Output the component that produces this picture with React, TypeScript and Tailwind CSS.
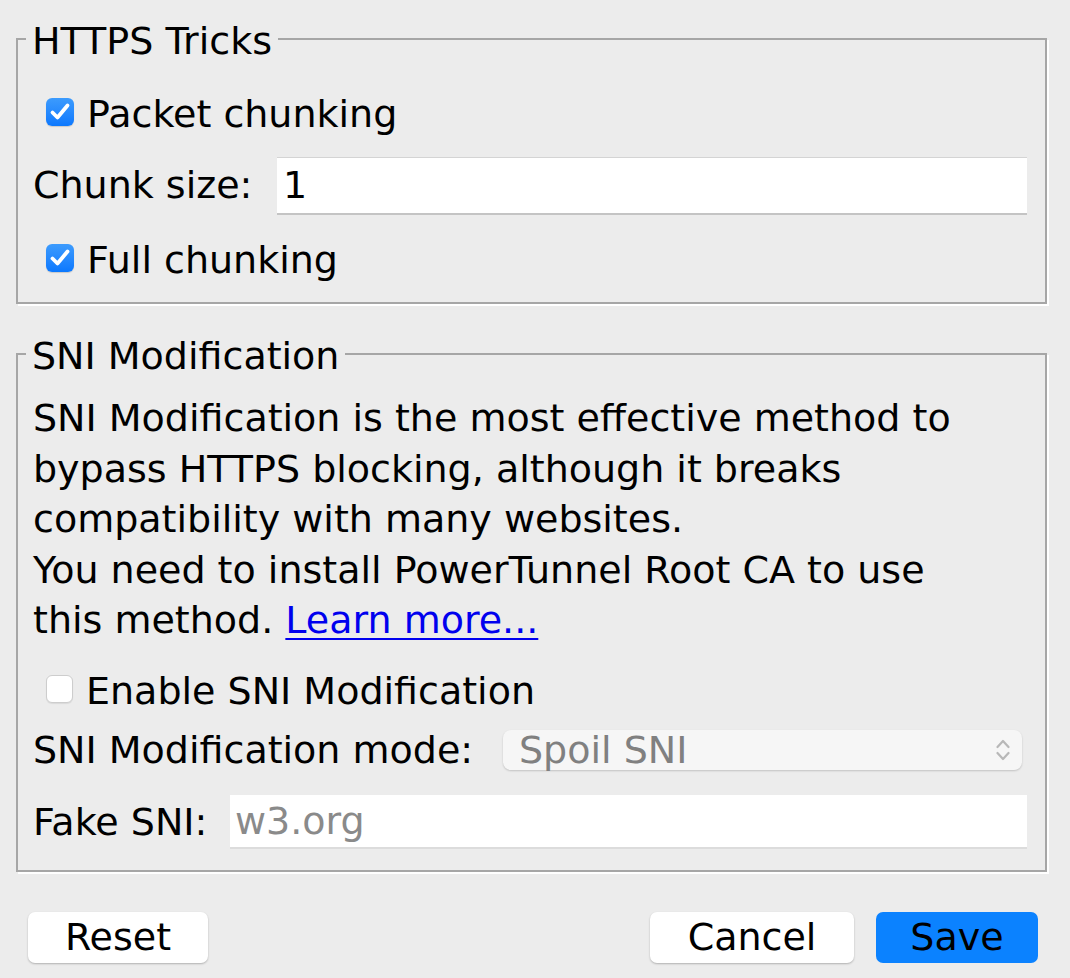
import type { ReactNode } from "react";

const FONT = "font-['DejaVu_Sans','Liberation_Sans',sans-serif]";

function Check({ checked }: { checked: boolean }) {
  if (!checked) {
    return (
      <span className="block w-[27px] h-[28px] shrink-0 rounded-[6px] bg-white border border-[#cdcdcd] shadow-[0_1px_1px_rgba(0,0,0,0.08)]" />
    );
  }
  return (
    <span className="flex items-center justify-center w-[28px] h-[28px] shrink-0 rounded-[6px] bg-gradient-to-b from-[#3c9bfd] to-[#0a78fe] shadow-[0_1px_1px_rgba(0,0,0,0.15)]">
      <svg width="22" height="22" viewBox="0 0 22 22" fill="none">
        <path
          d="M3.5 11.5 L8.5 16.5 L18.5 4.5"
          stroke="white"
          strokeWidth="3.8"
          strokeLinecap="round"
          strokeLinejoin="round"
        />
      </svg>
    </span>
  );
}

function CheckRow({ checked, label, className }: { checked: boolean; label: string; className?: string }) {
  return (
    <div className={`flex items-center h-[44px] pl-[28px] gap-[13px] ${className ?? ""}`}>
      <Check checked={checked} />
      <span className="leading-[44px] pt-[4px]">{label}</span>
    </div>
  );
}

function Group({ title, children, className }: { title: string; children: ReactNode; className?: string }) {
  return (
    <fieldset
      className={`ml-[16px] w-[1031px] border-2 border-[#a6a6a6] pl-[8px] shadow-[2px_2px_0_#ffffff] ${className ?? ""}`}
    >
      <legend className="px-[6px] pt-[4px] h-[44px] leading-[40px]">{title}</legend>
      <div className="-ml-[8px]">{children}</div>
    </fieldset>
  );
}

function Button({ children, className }: { children: ReactNode; className?: string }) {
  return (
    <button
      className={`h-[51px] rounded-[7px] text-black leading-[51px] text-center shadow-[0_1px_2px_rgba(0,0,0,0.25)] ${className ?? ""}`}
    >
      {children}
    </button>
  );
}

export default function App() {
  return (
    <div className={`w-[1070px] h-[978px] bg-[#ececec] text-black text-[38px] pt-[17px] overflow-hidden ${FONT}`}>
      <Group title="HTTPS Tricks" className="pb-[22px]">
        <CheckRow checked label="Packet chunking" className="mt-[29px]" />
        <div className="flex items-center mt-[23px] pl-[15px] pr-[18px]">
          <span className="w-[244px] shrink-0 leading-[44px]">Chunk size:</span>
          <div className="flex-1 h-[56px] bg-white border-t border-[#d4d4d4] shadow-[0_2px_0_#c4c4c4] pl-[6px] leading-[54px]">
            1
          </div>
        </div>
        <CheckRow checked label="Full chunking" className="mt-[23px]" />
      </Group>

      <Group title="SNI Modification" className="mt-[28px] pb-[21px]">
        <p className="mt-[17px] pl-[15px] leading-[50.5px]">
          SNI Modification is the most effective method to
          <br />
          bypass HTTPS blocking, although it breaks
          <br />
          compatibility with many websites.
          <br />
          You need to install PowerTunnel Root CA to use
          <br />
          this method.{" "}
          <a className="text-[#0000ee] underline underline-offset-[5px] decoration-[2px]" href="#">
            Learn more...
          </a>
        </p>
        <CheckRow checked={false} label="Enable SNI Modification" className="mt-[21px]" />
        <div className="flex items-center mt-[17px] pl-[15px] pr-[23px]">
          <span className="w-[470px] shrink-0 leading-[44px]">SNI Modification mode:</span>
          <div className="flex-1 flex items-center h-[40px] rounded-[8px] bg-[#f6f6f6] shadow-[0_1px_2px_rgba(0,0,0,0.18)] pl-[16px] pr-[12px]">
            <span className="flex-1 text-[#808080] leading-[40px]">Spoil SNI</span>
            <svg width="14" height="24" viewBox="0 0 14 24" fill="none">
              <path d="M1.5 9 L7 3 L12.5 9" stroke="#b8b8b8" strokeWidth="2.2" strokeLinecap="round" strokeLinejoin="round" />
              <path d="M1.5 15 L7 21 L12.5 15" stroke="#b8b8b8" strokeWidth="2.2" strokeLinecap="round" strokeLinejoin="round" />
            </svg>
          </div>
        </div>
        <div className="flex items-center mt-[23px] pl-[15px] pr-[18px]">
          <span className="w-[197px] shrink-0 leading-[44px]">Fake SNI:</span>
          <div className="flex-1 h-[54px] bg-white border-b-2 border-[#dcdcdc] pl-[5px] leading-[52px] text-[#8a8a8a]">
            w3.org
          </div>
        </div>
      </Group>

      <div className="flex items-center mt-[40px] pl-[28px] pr-[32px]">
        <Button className="w-[180px] bg-white">Reset</Button>
        <div className="flex-1" />
        <Button className="w-[204px] bg-white">Cancel</Button>
        <Button className="w-[162px] ml-[22px] bg-[#0b82ff] shadow-none">Save</Button>
      </div>
    </div>
  );
}
